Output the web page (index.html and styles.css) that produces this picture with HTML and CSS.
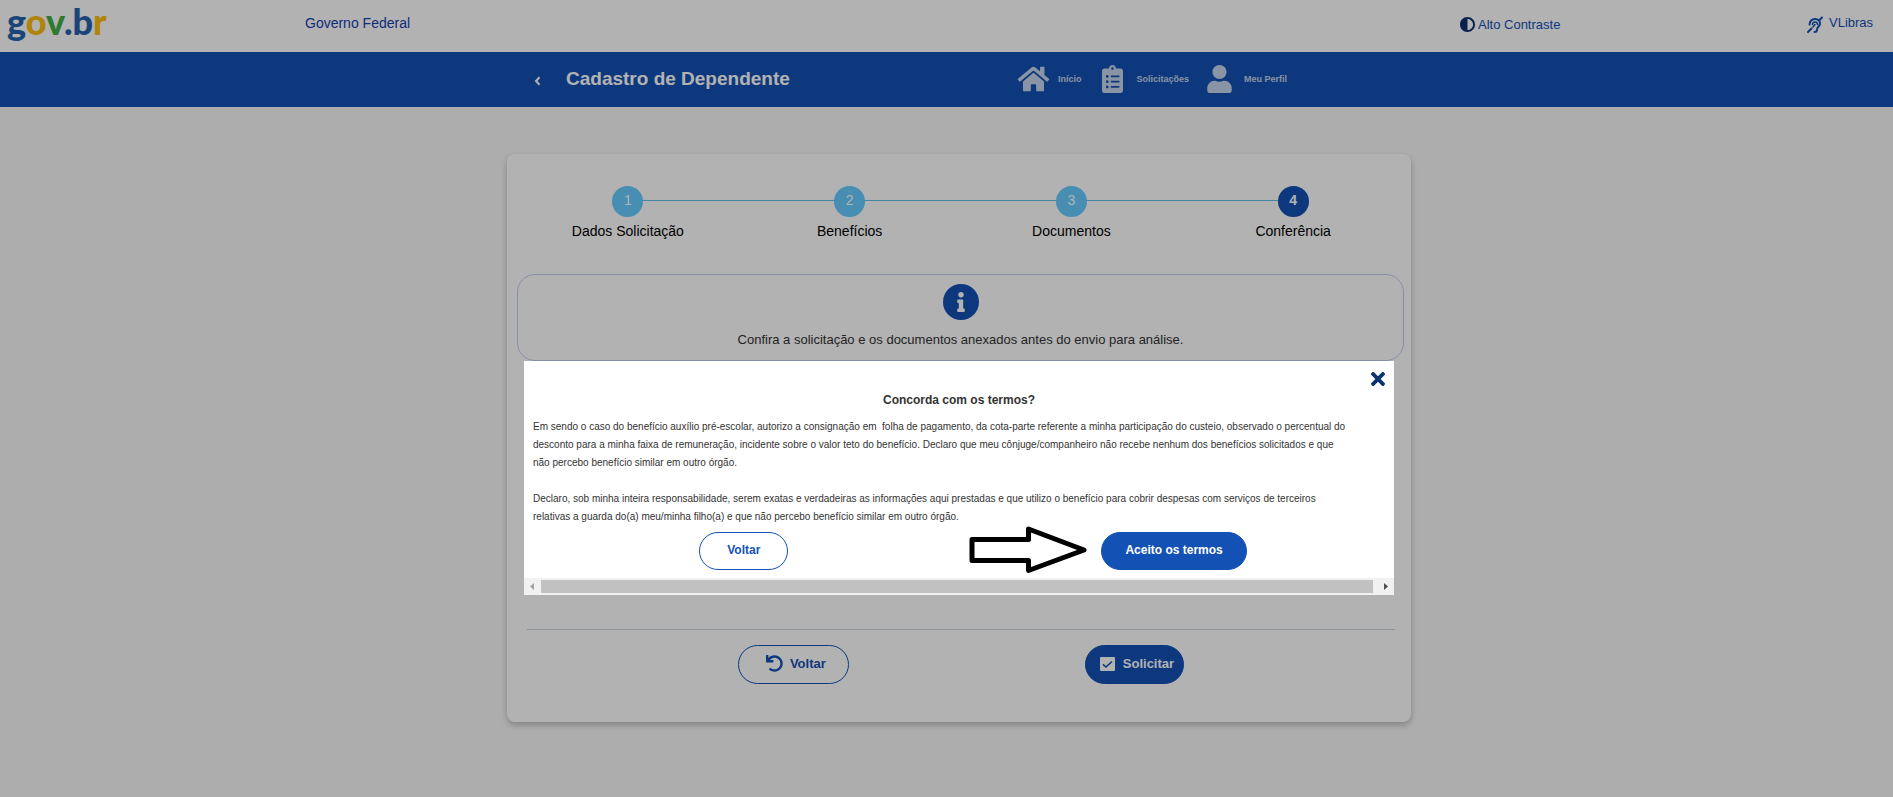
FILE: index.html
```html
<!DOCTYPE html>
<html lang="pt-BR">
<head>
<meta charset="utf-8">
<meta name="viewport" content="width=device-width, initial-scale=1">
<title>Cadastro de Dependente</title>
<link rel="stylesheet" href="styles.css">
</head>
<body>
<header class="topbar">
  <a class="logo" href="#"><span class="blue">g</span><span class="yellow">o</span><span class="green">v</span><span class="blue">.b</span><span class="yellow">r</span></a>
  <a class="gov" href="#">Governo Federal</a>
  <a class="tool contrast" href="#"><svg width="15" height="15" viewBox="8 8 496 496"><path fill="#0c326f" d="M8 256c0 136.966 111.033 248 248 248s248-111.034 248-248S392.966 8 256 8 8 119.033 8 256zm248 184V72c101.705 0 184 82.311 184 184 0 101.705-82.311 184-184 184z"/></svg>Alto Contraste</a>
  <a class="tool libras" href="#"><svg width="16" height="20" viewBox="0 -3 16 20" fill="none" stroke="#1351b4" stroke-width="2" stroke-linecap="round"><path d="M1 16 4.500 12.500M12.500 4 15 1.500M2.500 8.500C3 5 5.500 3 8 3c3 0 5 2 5 4.500 0 3-3 3.500-3 6C10 15 9 16 7.500 16"/><path stroke-width="1.500" d="M5.500 8.500c.5-3.500 5-3 5 0M8 8.500 6 11"/></svg>VLibras</a>
</header>

<div class="navbar">
  <div class="heading">
    <button class="back" type="button" aria-label="Voltar"><svg width="7" height="10" viewBox="0 0 7 10"><path d="M5.500 1.200 2 5l3.500 3.800" fill="none" stroke="#fff" stroke-width="2"/></svg></button>
    <h1>Cadastro de Dependente</h1>
  </div>
  <nav class="menu">
    <a href="#"><svg width="35" height="28" viewBox="0 0 576 512"><path d="M280.370 148.260L96 300.110V464a16 16 0 0 0 16 16l112.060-.29a16 16 0 0 0 15.920-16V368a16 16 0 0 1 16-16h64a16 16 0 0 1 16 16v95.640a16 16 0 0 0 16 16.050L464 480a16 16 0 0 0 16-16V300L295.670 148.260a12.190 12.190 0 0 0-15.300 0zM571.600 251.470L488 182.560V44.050a12 12 0 0 0-12-12h-56a12 12 0 0 0-12 12v72.610L318.470 43a48 48 0 0 0-61 0L4.340 251.470a12 12 0 0 0-1.600 16.900l25.500 31A12 12 0 0 0 45.150 301l235.220-193.740a12.190 12.190 0 0 1 15.300 0L530.900 301a12 12 0 0 0 16.900-1.600l25.500-31a12 12 0 0 0-1.700-16.930z"/></svg>Início</a>
    <a href="#"><svg width="35" height="28" viewBox="0 0 384 512"><path d="M336 64h-80c0-35.300-28.700-64-64-64s-64 28.700-64 64H48C21.500 64 0 85.500 0 112v352c0 26.500 21.500 48 48 48h288c26.500 0 48-21.500 48-48V112c0-26.500-21.500-48-48-48zM96 424c-13.300 0-24-10.700-24-24s10.700-24 24-24 24 10.700 24 24-10.700 24-24 24zm0-96c-13.300 0-24-10.700-24-24s10.700-24 24-24 24 10.700 24 24-10.700 24-24 24zm0-96c-13.300 0-24-10.700-24-24s10.700-24 24-24 24 10.700 24 24-10.700 24-24 24zm96-192c13.300 0 24 10.700 24 24s-10.700 24-24 24-24-10.700-24-24 10.700-24 24-24zm128 368c0 4.400-3.600 8-8 8H168c-4.400 0-8-3.600-8-8v-16c0-4.400 3.600-8 8-8h144c4.400 0 8 3.600 8 8v16zm0-96c0 4.400-3.600 8-8 8H168c-4.400 0-8-3.600-8-8v-16c0-4.400 3.600-8 8-8h144c4.400 0 8 3.600 8 8v16zm0-96c0 4.400-3.600 8-8 8H168c-4.400 0-8-3.600-8-8v-16c0-4.400 3.600-8 8-8h144c4.400 0 8 3.600 8 8v16z"/></svg>Solicitações</a>
    <a href="#"><svg width="35" height="28" viewBox="0 0 448 512"><path d="M224 256c70.700 0 128-57.300 128-128S294.700 0 224 0 96 57.300 96 128s57.300 128 128 128zm89.600 32h-16.700c-22.200 10.200-46.900 16-72.900 16s-50.600-5.800-72.900-16h-16.700C60.200 288 0 348.200 0 422.400V464c0 26.500 21.500 48 48 48h352c26.500 0 48-21.500 48-48v-41.600c0-74.200-60.200-134.400-134.400-134.400z"/></svg>Meu Perfil</a>
  </nav>
</div>

<main class="page">
  <div class="card">
    <ol class="steps">
      <li><span class="dot">1</span>Dados Solicitação</li>
      <li><span class="dot">2</span>Benefícios</li>
      <li><span class="dot">3</span>Documentos</li>
      <li class="active" aria-current="step"><span class="dot">4</span>Conferência</li>
    </ol>
    <section class="notice">
      <span class="info"><svg width="8" height="20" viewBox="0 0 192 512"><path fill="#fff" d="M20 424.229h20V279.771H20c-11.046 0-20-8.954-20-20V212c0-11.046 8.954-20 20-20h112c11.046 0 20 8.954 20 20v212.229h20c11.046 0 20 8.954 20 20V492c0 11.046-8.954 20-20 20H20c-11.046 0-20-8.954-20-20v-47.771c0-11.046 8.954-20 20-20zM96 0C56.235 0 24 32.235 24 72s32.235 72 72 72 72-32.235 72-72S135.764 0 96 0z"/></svg></span>
      <p>Confira a solicitação e os documentos anexados antes do envio para análise.</p>
    </section>
    <div class="actions">
      <button class="btn outline undo" type="button"><svg width="17" height="17" viewBox="0 0 512 512"><path fill="#1351b4" d="M212.333 224.333H12c-6.627 0-12-5.373-12-12V12C0 5.373 5.373 0 12 0h48c6.627 0 12 5.373 12 12v78.112C117.773 39.279 184.260 7.470 258.175 8.007c136.906.994 246.448 111.623 246.157 248.532C504.041 393.258 393.120 504 256.333 504c-64.089 0-122.496-24.313-166.510-64.215-5.099-4.622-5.334-12.554-.467-17.420l33.967-33.967c4.474-4.474 11.662-4.717 16.401-.525C170.760 415.336 211.580 432 256.333 432c97.268 0 176-78.716 176-176 0-97.267-78.716-176-176-176-58.496 0-110.280 28.476-142.274 72.333h98.274c6.627 0 12 5.373 12 12v48c0 6.627-5.373 12-12 12z"/></svg>Voltar</button>
      <button class="btn solid submit" type="button"><svg width="15" height="14" viewBox="0 0 15 14"><rect width="15" height="14" rx="1" fill="#fff"/><path d="M3 7.300 6 10l6-5.500" fill="none" stroke="#1351b4" stroke-width="1.600"/></svg>Solicitar</button>
    </div>
  </div>
</main>

<div class="overlay">
  <div class="modal" role="dialog" aria-modal="true" aria-labelledby="terms-title">
    <button class="close" type="button" aria-label="Fechar"><svg width="14" height="14" viewBox="0 80 352 352"><path fill="#0c326f" d="M242.720 256l100.070-100.070c12.280-12.280 12.280-32.190 0-44.480l-22.240-22.240c-12.280-12.280-32.190-12.280-44.480 0L176 189.280 75.930 89.210c-12.280-12.280-32.190-12.280-44.480 0L9.210 111.450c-12.280 12.280-12.280 32.190 0 44.480L109.280 256 9.210 356.070c-12.280 12.280-12.280 32.190 0 44.480l22.240 22.240c12.280 12.280 32.200 12.280 44.480 0L176 322.720l100.070 100.070c12.280 12.280 32.200 12.280 44.480 0l22.240-22.240c12.280-12.280 12.280-32.190 0-44.480L242.720 256z"/></svg></button>
    <h2 id="terms-title">Concorda com os termos?</h2>
    <div class="terms">
      <p>Em sendo o caso do benefício auxílio pré-escolar, autorizo a consignação em&nbsp; folha de pagamento, da cota-parte referente a minha participação do custeio, observado o percentual do<br>desconto para a minha faixa de remuneração, incidente sobre o valor teto do benefício. Declaro que meu cônjuge/companheiro não recebe nenhum dos benefícios solicitados e que<br>não percebo benefício similar em outro órgão.</p>
      <p>Declaro, sob minha inteira responsabilidade, serem exatas e verdadeiras as informações aqui prestadas e que utilizo o benefício para cobrir despesas com serviços de terceiros<br>relativas a guarda do(a) meu/minha filho(a) e que não percebo benefício similar em outro órgão.</p>
    </div>
    <div class="choices">
      <button class="btn outline" type="button">Voltar</button>
      <div class="accept">
        <svg class="pointer" width="119" height="48" viewBox="0 0 119 48"><path d="M3 13.500H59.500V3L115 24 59.500 44.500V34.500H3Z" fill="#fff" stroke="#000" stroke-width="5" stroke-linejoin="round"/></svg>
        <button class="btn solid" type="button">Aceito os termos</button>
      </div>
    </div>
    <div class="scrollbar" aria-hidden="true">
      <svg width="17" height="17" viewBox="0 0 17 17"><path d="M10 5v7L6 8.500z" fill="#a3a3a3"/></svg>
      <span class="thumb"></span>
      <svg width="17" height="17" viewBox="0 0 17 17"><path d="M7 5v7l4-3.500z" fill="#505050"/></svg>
    </div>
  </div>
</div>
</body>
</html>
```
FILE: styles.css
```css
* { box-sizing: border-box; }
body {
  margin: 0;
  min-height: 100vh;
  background: #f8f8f8;
  color: #333;
  font-family: "Liberation Sans", Arial, sans-serif;
  font-size: 13px;
}
h1, h2, p, ol { margin: 0; padding: 0; }
a { color: #1351b4; text-decoration: none; }
button { font: inherit; cursor: pointer; }
svg { display: block; flex: none; }

.topbar {
  display: grid;
  grid-template-columns: 305fr 1155fr 347fr 86fr;
  height: 52px;
  background: #fff;
}
.logo {
  padding-left: 7px;
  font-family: Lato, sans-serif;
  font-size: 36px;
  font-weight: 900;
  line-height: 42px;
}
.blue { color: #2864ae; }
.yellow { color: #fdbe0f; }
.green { color: #42b045; }
.gov { font-size: 14px; line-height: 47px; color: #1540b0; }
.tool { display: flex; align-items: center; height: 48px; white-space: nowrap; }
.contrast { gap: 3px; }
.libras { height: 45px; gap: 6px; }

.navbar {
  display: grid;
  grid-template-columns: 534fr 482fr 877fr;
  align-items: center;
  height: 55px;
  padding-bottom: 2px;
  background: #1351b4;
}
.heading { grid-column: 2; display: flex; align-items: center; gap: 25px; color: #fff; }
.heading h1 { font-size: 19px; line-height: 24px; white-space: nowrap; }
.back { padding: 4px 0 0; border: 0; background: none; }
.menu { display: flex; gap: 13px; }
.menu a {
  display: flex;
  align-items: center;
  gap: 7px;
  color: #c5d4eb;
  font-size: 9px;
  font-weight: bold;
  white-space: nowrap;
}
.menu svg { fill: #c5d4eb; }

.page { display: flex; justify-content: center; padding: 47px 0 40px 25px; }
.card {
  width: 100%;
  max-width: 904px;
  padding: 32px 7px 38px 10px;
  border-radius: 8px;
  background: #fff;
  box-shadow: 0 3px 6px rgba(0, 0, 0, 0.24);
}
.steps { display: grid; grid-template-columns: repeat(4, 1fr); list-style: none; }
.steps li {
  position: relative;
  display: flex;
  flex-direction: column;
  align-items: center;
  gap: 4px;
  color: #000;
  font-size: 14px;
  line-height: 20px;
}
.steps li + li::before {
  content: "";
  position: absolute;
  top: 14px;
  right: 50%;
  width: 100%;
  height: 1px;
  background: #5fc0ee;
}
.dot {
  position: relative;
  z-index: 1;
  width: 31px;
  height: 31px;
  border-radius: 50%;
  background: #66ccff;
  color: #fff;
  line-height: 29px;
  text-align: center;
}
.steps .active .dot { background: #1351b4; font-weight: bold; }

.notice {
  display: flex;
  flex-direction: column;
  align-items: center;
  gap: 10px;
  margin-top: 33px;
  padding: 9px 10px 10px;
  border: 1px solid #c0d0f0;
  border-radius: 18px;
  line-height: 20px;
}
.info {
  display: grid;
  place-items: center;
  width: 36px;
  height: 36px;
  border-radius: 50%;
  background: #1351b4;
}
.actions {
  display: flex;
  justify-content: center;
  gap: 236px;
  margin: 268px 9px 0 10px;
  padding-top: 15px;
  border-top: 1px solid #c8d5de;
}
.btn {
  display: flex;
  align-items: center;
  justify-content: center;
  height: 38px;
  padding: 0 23px 2px;
  border: 1px solid #1351b4;
  border-radius: 19px;
  font-weight: bold;
  white-space: nowrap;
}
.outline { padding: 0 27px 2px; background: #fff; color: #1351b4; }
.solid { background: #1351b4; color: #fff; }
.undo { gap: 7px; padding-right: 22px; }
.submit { gap: 8px; padding: 0 9px 2px 14px; }
.actions .btn { height: 39px; border-radius: 20px; }

.overlay {
  position: fixed;
  inset: 0;
  z-index: 10;
  display: flex;
  align-items: flex-start;
  justify-content: center;
  padding: 361px 0 0 25px;
  background: rgba(0, 0, 0, 0.3);
}
.modal {
  position: relative;
  width: 100%;
  max-width: 870px;
  padding-top: 29px;
  background: #fff;
  font-size: 12px;
}
.close {
  position: absolute;
  top: 11px;
  right: 9px;
  padding: 0;
  border: 0;
  background: none;
}
.modal h2 { font-size: 12px; line-height: 20px; text-align: center; }
.terms {
  display: grid;
  gap: 18px;
  padding: 8px 9px 6px;
  font-size: 10px;
  line-height: 18px;
}
.choices { display: flex; justify-content: center; gap: 313px; padding: 0 0 8px 28px; }
.accept { position: relative; }
.pointer { position: absolute; right: calc(100% + 13px); top: -6px; }
.scrollbar { display: flex; height: 17px; background: #f1f1f1; }
.thumb { flex: 1; margin: 2px 4px 2px 0; background: #c1c1c1; }
```
